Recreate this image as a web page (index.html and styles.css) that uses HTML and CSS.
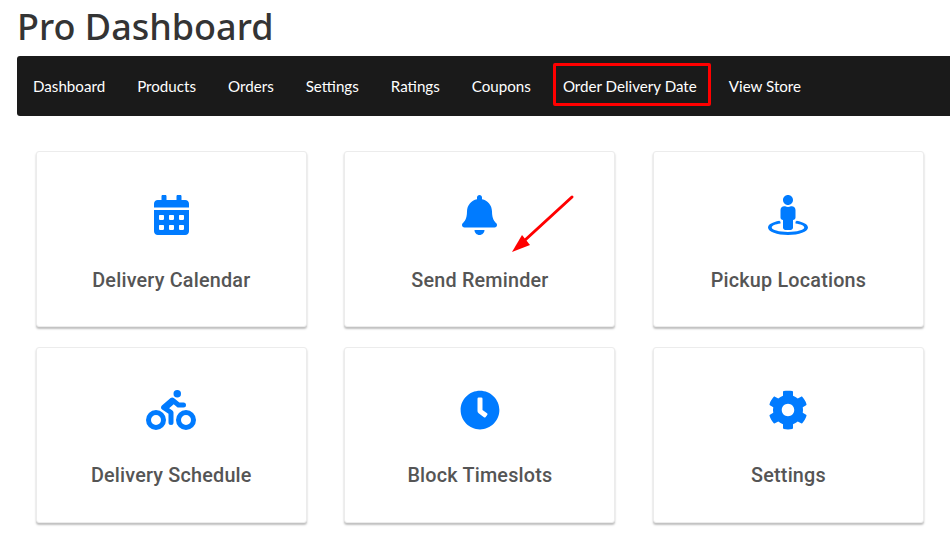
FILE: index.html
```html
<!DOCTYPE html>
<html lang="en">
<head>
<meta charset="utf-8">
<title>Pro Dashboard</title>
<link rel="stylesheet" href="styles.css">
</head>
<body>
<div class="page">
  <h1 class="title">Pro Dashboard</h1>
  <nav class="nav">
    <a class="nav-link">Dashboard</a>
    <a class="nav-link">Products</a>
    <a class="nav-link">Orders</a>
    <a class="nav-link">Settings</a>
    <a class="nav-link">Ratings</a>
    <a class="nav-link">Coupons</a>
    <a class="nav-link nav-link-marked">Order Delivery Date</a>
    <a class="nav-link">View Store</a>
  </nav>
  <section class="cards">
    <div class="card">
      <svg class="icon" viewBox="0 0 448 512"><path d="M0 464c0 26.5 21.5 48 48 48h352c26.5 0 48-21.5 48-48V192H0v272zm320-196c0-6.6 5.4-12 12-12h40c6.6 0 12 5.4 12 12v40c0 6.6-5.4 12-12 12h-40c-6.6 0-12-5.4-12-12v-40zm0 128c0-6.6 5.4-12 12-12h40c6.6 0 12 5.4 12 12v40c0 6.6-5.4 12-12 12h-40c-6.6 0-12-5.4-12-12v-40zM192 268c0-6.6 5.4-12 12-12h40c6.6 0 12 5.4 12 12v40c0 6.6-5.4 12-12 12h-40c-6.6 0-12-5.4-12-12v-40zm0 128c0-6.6 5.4-12 12-12h40c6.6 0 12 5.4 12 12v40c0 6.6-5.4 12-12 12h-40c-6.6 0-12-5.4-12-12v-40zM64 268c0-6.6 5.4-12 12-12h40c6.6 0 12 5.4 12 12v40c0 6.6-5.4 12-12 12H76c-6.6 0-12-5.4-12-12v-40zm0 128c0-6.6 5.4-12 12-12h40c6.6 0 12 5.4 12 12v40c0 6.6-5.4 12-12 12H76c-6.6 0-12-5.4-12-12v-40zM400 64h-48V16c0-8.8-7.2-16-16-16h-32c-8.8 0-16 7.2-16 16v48H160V16c0-8.8-7.2-16-16-16h-32c-8.8 0-16 7.2-16 16v48H48C21.5 64 0 85.5 0 112v48h448v-48c0-26.5-21.5-48-48-48z"/></svg>
      <h3 class="card-title">Delivery Calendar</h3>
    </div>
    <div class="card">
      <svg class="icon" viewBox="0 0 448 512"><path d="M224 512c35.32 0 63.97-28.65 63.97-64H160.03c0 35.35 28.65 64 63.97 64zm215.39-149.71c-19.32-20.76-55.47-51.99-55.47-154.29 0-77.7-54.48-139.9-127.94-155.16V32c0-17.67-14.32-32-31.98-32s-31.98 14.33-31.98 32v20.84C118.56 68.1 64.08 130.3 64.08 208c0 102.3-36.15 133.53-55.47 154.29-6 6.45-8.66 14.16-8.61 21.71.11 16.4 12.98 32 32.1 32h383.8c19.12 0 32-15.6 32.1-32 .05-7.55-2.61-15.27-8.61-21.71z"/></svg>
      <h3 class="card-title">Send Reminder</h3>
    </div>
    <div class="card">
      <svg class="icon" viewBox="0 0 512 512"><path d="M367.9 329.76c-4.62 5.3-9.78 10.1-15.9 13.65v22.94c66.52 9.34 112 28.05 112 49.65 0 30.93-93.12 56-208 56S48 446.93 48 416c0-21.6 45.48-40.3 112-49.65v-22.94c-6.12-3.55-11.28-8.35-15.9-13.65C58.87 345.34 0 378.05 0 416c0 53.02 114.62 96 256 96s256-42.98 256-96c0-37.95-58.87-70.66-144.1-86.24zM256 128c35.35 0 64-28.65 64-64S291.35 0 256 0s-64 28.65-64 64 28.65 64 64 64zm-64 192v96c0 17.67 14.33 32 32 32h64c17.67 0 32-14.33 32-32v-96c17.67 0 32-14.33 32-32v-96c0-26.51-21.49-48-48-48h-11.8c-11.07 5.03-23.26 8-36.2 8s-25.13-2.97-36.2-8H208c-26.51 0-48 21.49-48 48v96c0 17.67 14.33 32 32 32z"/></svg>
      <h3 class="card-title">Pickup Locations</h3>
    </div>
    <div class="card">
      <svg class="icon" viewBox="0 0 640 512"><path d="M400 96a48 48 0 1 0-48-48 48 48 0 0 0 48 48zm-4 121a31.94 31.94 0 0 0 20 7h64a32 32 0 0 0 0-64h-52.78L356 103a31.94 31.94 0 0 0-40.81.68l-112 96a32 32 0 0 0 3.08 50.92L288 305.12V416a32 32 0 0 0 64 0V288a32 32 0 0 0-14.25-26.62l-41.36-27.57 58.25-49.92zm116 39a128 128 0 1 0 128 128 128 128 0 0 0-128-128zm0 192a64 64 0 1 1 64-64 64 64 0 0 1-64 64zM128 256a128 128 0 1 0 128 128 128 128 0 0 0-128-128zm0 192a64 64 0 1 1 64-64 64 64 0 0 1-64 64z"/></svg>
      <h3 class="card-title">Delivery Schedule</h3>
    </div>
    <div class="card">
      <svg class="icon" viewBox="0 0 512 512"><path d="M256,8C119,8,8,119,8,256S119,504,256,504,504,393,504,256,393,8,256,8Zm92.49,313h0l-20,25a16,16,0,0,1-22.49,2.5h0l-67-49.72a40,40,0,0,1-15-31.23V112a16,16,0,0,1,16-16h32a16,16,0,0,1,16,16V256l58,42.5A16,16,0,0,1,348.49,321Z"/></svg>
      <h3 class="card-title">Block Timeslots</h3>
    </div>
    <div class="card">
      <svg class="icon" viewBox="0 0 512 512"><path d="M487.4 315.7l-42.6-24.6c4.3-23.2 4.3-47 0-70.2l42.6-24.6c4.9-2.8 7.1-8.6 5.5-14-11.1-35.6-30-67.8-54.7-94.6-3.8-4.1-10-5.1-14.8-2.3L380.8 110c-17.9-15.4-38.5-27.3-60.8-35.1V25.8c0-5.6-3.9-10.5-9.4-11.7-36.7-8.2-74.3-7.8-109.2 0-5.5 1.2-9.4 6.1-9.4 11.7V75c-22.2 7.9-42.8 19.8-60.8 35.1L88.7 85.5c-4.9-2.8-11-1.9-14.8 2.3-24.7 26.7-43.6 58.9-54.7 94.6-1.7 5.4.6 11.2 5.5 14L67.3 221c-4.3 23.2-4.3 47 0 70.2l-42.6 24.6c-4.9 2.8-7.1 8.6-5.5 14 11.1 35.6 30 67.8 54.7 94.6 3.8 4.1 10 5.1 14.8 2.3l42.6-24.6c17.9 15.4 38.5 27.3 60.8 35.1v49.2c0 5.6 3.9 10.5 9.4 11.7 36.7 8.2 74.3 7.8 109.2 0 5.5-1.2 9.4-6.1 9.4-11.7v-49.2c22.2-7.9 42.8-19.8 60.8-35.1l42.6 24.6c4.9 2.8 11 1.9 14.8-2.3 24.7-26.7 43.6-58.9 54.7-94.6 1.5-5.5-.7-11.3-5.6-14.1zM256 336c-44.1 0-80-35.9-80-80s35.9-80 80-80 80 35.9 80 80-35.9 80-80 80z"/></svg>
      <h3 class="card-title">Settings</h3>
    </div>
  </section>
</div>
<svg class="arrow" viewBox="0 0 66 62"><path class="arrow-line" d="M62 3 L14 47"/><path class="arrow-head" d="M2 58 L12 41 L20 51 Z"/></svg>
</body>
</html>
```

FILE: styles.css
```css
html, body {
  margin: 0;
  padding: 0;
  background: #fff;
}
body {
  position: relative;
  height: 544px;
  overflow: hidden;
  font-family: "Noto Sans", "Open Sans", sans-serif;
}
.page {
  padding-left: 17px;
}
.title {
  margin: 0;
  height: 56px;
  font-size: 36px;
  line-height: 53px;
  font-weight: 500;
  color: #343434;
}
.nav {
  display: flex;
  align-items: center;
  height: 60px;
  padding-left: 16px;
  gap: 32px;
  background: #1a1a1a;
  border-radius: 3px 0 0 3px;
}
.nav-link {
  position: relative;
  font-family: Lato, "Noto Sans", sans-serif;
  font-size: 15.15px;
  line-height: 20px;
  color: #fff;
}
.nav-link-marked::after {
  content: "";
  position: absolute;
  left: -10px;
  right: -14px;
  top: -13px;
  bottom: -10px;
  border: 3px solid #f00;
  border-radius: 2px;
}
.cards {
  display: grid;
  grid-template-columns: repeat(3, 271px);
  column-gap: 37.6px;
  row-gap: 20px;
  margin-top: 34.8px;
  padding-left: 18.8px;
}
.card {
  display: flex;
  flex-direction: column;
  align-items: center;
  box-sizing: border-box;
  height: 175.9px;
  padding-top: 42.75px;
  background: #fff;
  border: 1px solid #ececec;
  border-radius: 3px;
  box-shadow: 0 2px 2px rgba(0, 0, 0, 0.25);
}
.icon {
  display: block;
  height: 40px;
  fill: #007bff;
}
.card-title {
  margin: 33px 0 0;
  font-family: Roboto, sans-serif;
  font-size: 19.8px;
  line-height: 26px;
  font-weight: 500;
  letter-spacing: 0.2px;
  color: #555;
}
.arrow {
  position: absolute;
  left: 510px;
  top: 194px;
  width: 66px;
  height: 62px;
}
.arrow-line {
  stroke: #f00;
  stroke-width: 3;
  stroke-linecap: round;
  fill: none;
}
.arrow-head {
  fill: #f00;
}
```
